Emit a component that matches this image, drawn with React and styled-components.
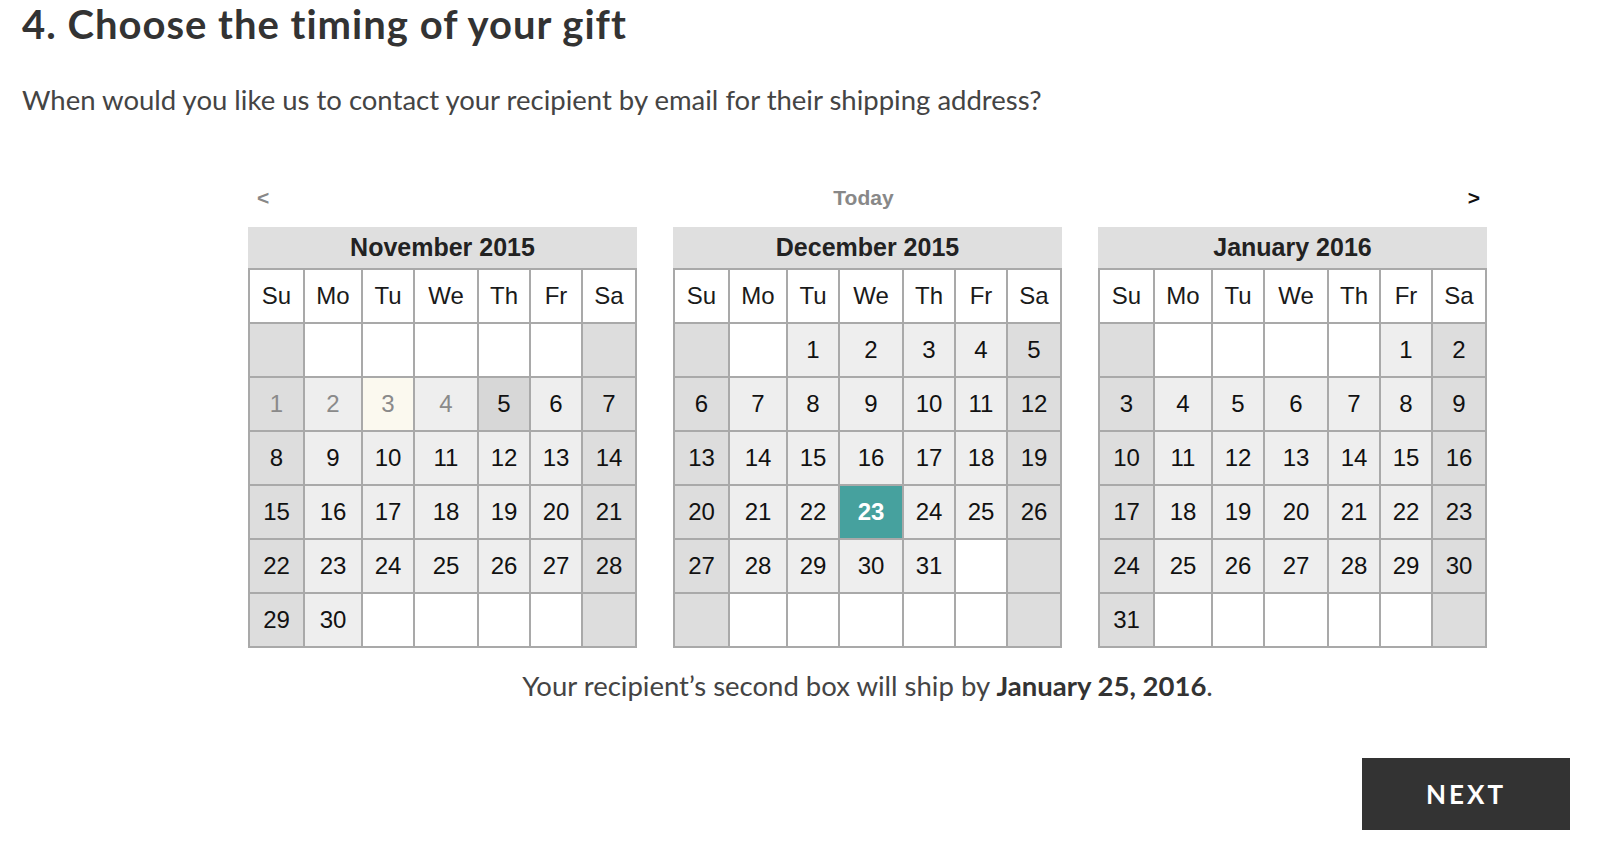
import styled, { createGlobalStyle } from "styled-components";

const GlobalStyle = createGlobalStyle`
  body {
    margin: 0;
    background: #fff;
  }
`;

const WEEKDAYS = ["Su", "Mo", "Tu", "We", "Th", "Fr", "Sa"];

const MONTHS = [
  { name: "November 2015", key: "nov", offset: 7, days: 30 },
  { name: "December 2015", key: "dec", offset: 2, days: 31 },
  { name: "January 2016", key: "jan", offset: 5, days: 31 },
];

// special states in the picker
const getState = (key, day) => {
  if (key === "nov" && day === 3) return "today";
  if (key === "nov" && day < 5) return "past";
  if (key === "nov" && day === 5) return "hover";
  if (key === "dec" && day === 23) return "selected";
  return "normal";
};

const App = () => {
  return (
    <Page>
      <GlobalStyle />
      <Title>4. Choose the timing of your gift</Title>
      <Question>
        When would you like us to contact your recipient by email for their
        shipping address?
      </Question>

      <Picker>
        <Nav>
          <Arrow $muted>&lt;</Arrow>
          <Today>Today</Today>
          <Arrow>&gt;</Arrow>
        </Nav>

        <Months>
          {MONTHS.map((m) => (
            <Month key={m.key} month={m} />
          ))}
        </Months>

        <ShipNote>
          Your recipient’s second box will ship by{" "}
          <strong>January 25, 2016</strong>.
        </ShipNote>
      </Picker>

      <Actions>
        <NextButton>NEXT</NextButton>
      </Actions>
    </Page>
  );
};

const Month = ({ month }) => {
  const cells = [];
  for (let i = 0; i < 42; i++) {
    const day = i - month.offset + 1;
    const inMonth = day >= 1 && day <= month.days;
    const col = i % 7;
    cells.push(
      <Day
        key={i}
        $weekend={col === 0 || col === 6}
        $filled={inMonth}
        $state={inMonth ? getState(month.key, day) : "normal"}
      >
        {inMonth ? day : ""}
      </Day>
    );
  }

  return (
    <MonthBox>
      <MonthHead>{month.name}</MonthHead>
      <Grid>
        {WEEKDAYS.map((w) => (
          <Weekday key={w}>{w}</Weekday>
        ))}
        {cells}
      </Grid>
    </MonthBox>
  );
};

const Page = styled.div`
  padding: 2px 32px 14px 22px;
  font-family: "Lato", "Noto Sans", sans-serif;
  color: #333;
`;

const Title = styled.h2`
  margin: 0;
  font-size: 40px;
  font-weight: 700;
  letter-spacing: 1px;
  line-height: 45px;
  color: #333;
`;

const Question = styled.p`
  margin: 37px 0 0;
  font-size: 27.5px;
  line-height: 32px;
  color: #444;
`;

const Picker = styled.div`
  width: 1239px;
  margin: 70px 0 0 226px;
  font-family: "Liberation Sans", Arial, sans-serif;
`;

const Nav = styled.div`
  display: flex;
  justify-content: space-between;
  align-items: center;
  height: 24px;
  padding: 0 7px 0 9px;
  font-size: 21px;
  font-weight: 700;
  line-height: 24px;
`;

const Arrow = styled.span`
  color: ${(p) => (p.$muted ? "#888" : "#111")};
  font-weight: 900;
`;

const Today = styled.span`
  color: #888;
  margin-left: -10px;
`;

const Months = styled.div`
  display: flex;
  gap: 36px;
  margin-top: 17px;
`;

const MonthBox = styled.div`
  width: 389px;
`;

const MonthHead = styled.div`
  height: 41px;
  background: #dfdfdf;
  color: #222;
  font-size: 25px;
  font-weight: 700;
  line-height: 41px;
  text-align: center;
`;

const Grid = styled.div`
  display: grid;
  grid-template-columns: 53px 56px 50px 62px 50px 50px 52px;
  grid-auto-rows: 52px;
  gap: 2px;
  padding: 2px;
  background: #a9a9a9;
`;

const Weekday = styled.div`
  display: flex;
  align-items: center;
  justify-content: center;
  background: #fff;
  color: #1a1a1a;
  font-size: 24px;
`;

const dayBackground = (p) => {
  if (p.$state === "selected") return "#46a19e";
  if (p.$state === "today") return "#fbf9ef";
  if (p.$state === "hover") return "#d7d7d7";
  if (p.$weekend) return "#dddddd";
  return p.$filled ? "#eeeeee" : "#ffffff";
};

const dayColor = (p) => {
  if (p.$state === "selected") return "#fff";
  if (p.$state === "past" || p.$state === "today") return "#8a8a8a";
  return "#111";
};

const Day = styled.div`
  display: flex;
  align-items: center;
  justify-content: center;
  background: ${dayBackground};
  color: ${dayColor};
  font-size: 24px;
  font-weight: ${(p) => (p.$state === "selected" ? 700 : 400)};
`;

const ShipNote = styled.p`
  margin: 22px 0 0;
  text-align: center;
  font-family: "Lato", "Noto Sans", sans-serif;
  font-size: 27.5px;
  line-height: 32px;
  color: #444;

  strong {
    font-weight: 700;
    color: #333;
  }
`;

const Actions = styled.div`
  display: flex;
  justify-content: flex-end;
  margin-top: 56px;
`;

const NextButton = styled.button`
  width: 208px;
  height: 72px;
  border: 0;
  background: #333;
  color: #fff;
  font-family: "Lato", "Noto Sans", sans-serif;
  font-size: 26px;
  font-weight: 700;
  letter-spacing: 3px;
  cursor: pointer;
`;

export default App;
